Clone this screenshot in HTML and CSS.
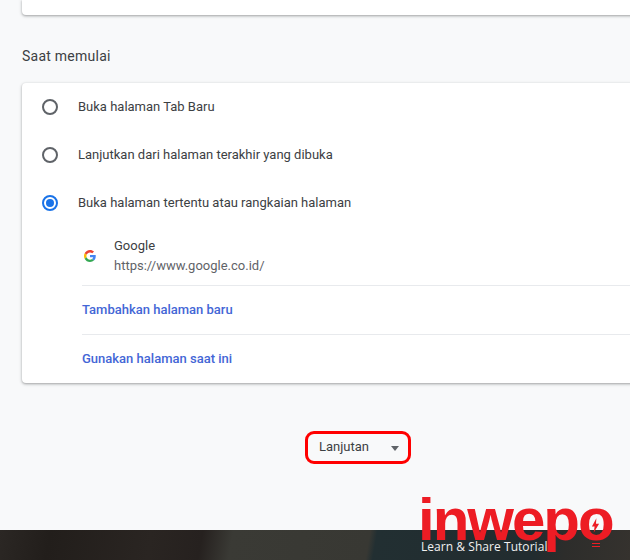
FILE: index.html
```html
<!DOCTYPE html>
<html lang="id">
<head>
<meta charset="utf-8">
<title>Saat memulai</title>
<link rel="stylesheet" href="styles.css">
</head>
<body>
<div class="page">
  <main class="content">
    <div class="card card-top"></div>
    <h2 class="section-title">Saat memulai</h2>
    <section class="card card-main">
      <div class="radio-row"><span class="radio"></span><span class="label">Buka halaman Tab Baru</span></div>
      <div class="radio-row"><span class="radio"></span><span class="label">Lanjutkan dari halaman terakhir yang dibuka</span></div>
      <div class="radio-row"><span class="radio radio-on"></span><span class="label">Buka halaman tertentu atau rangkaian halaman</span></div>
      <div class="sub">
        <div class="site">
          <svg class="favicon" viewBox="0 0 48 48" width="12" height="12" aria-hidden="true">
            <path fill="#EA4335" d="M24 9.500c3.500 0 6.700 1.200 9.200 3.600l6.900-6.900C35.900 2.400 30.500 0 24 0 14.600 0 6.500 5.400 2.600 13.200l8 6.200C12.500 13.700 17.800 9.500 24 9.500z"/>
            <path fill="#4285F4" d="M47 24.500c0-1.600-.1-3.100-.4-4.500H24v9h12.900c-.6 3-2.200 5.500-4.800 7.200l7.800 6C44.400 37.600 47 31.600 47 24.500z"/>
            <path fill="#FBBC05" d="M10.500 28.600C10 27.200 9.800 25.600 9.800 24s.2-3.200.8-4.600l-8-6.200C.9 16.500 0 20.100 0 24s.9 7.500 2.600 10.800l7.900-6.200z"/>
            <path fill="#34A853" d="M24 48c6.500 0 11.900-2.100 15.900-5.800l-7.800-6c-2.100 1.400-4.900 2.300-8.100 2.300-6.200 0-11.500-4.200-13.400-9.900l-8 6.200C6.500 42.600 14.600 48 24 48z"/>
          </svg>
          <div class="site-text">
            <div class="site-name">Google</div>
            <div class="site-url">https://www.google.co.id/</div>
          </div>
        </div>
        <div class="link-row">Tambahkan halaman baru</div>
        <div class="link-row">Gunakan halaman saat ini</div>
      </div>
    </section>
    <div class="advanced-wrap">
      <div class="advanced"><span>Lanjutan</span><span class="caret"></span></div>
    </div>
  </main>
  <footer class="footer"></footer>
  <div class="logo">
    <div class="logo-word">inwepo</div>
    <div class="logo-tag">Learn &amp; Share Tutorial</div>
    <svg class="logo-bolt" viewBox="0 0 10 16" width="9" height="15" aria-hidden="true"><path fill="#ed1c24" d="M6 0 1 9h3l-1 7 6-10H5.500z"/></svg>
    <span class="logo-base"></span>
  </div>
</div>
</body>
</html>
```
FILE: styles.css
```css
* { box-sizing: border-box; }
html, body { margin: 0; height: 100%; }
body { font-family: Roboto, "Liberation Sans", sans-serif; background: #f8f9fa; overflow: hidden; }
.page { position: relative; width: 630px; height: 560px; overflow: hidden; display: flex; flex-direction: column; }
.content { height: 530px; padding-left: 22px; display: flex; flex-direction: column; }
.card { background: #fff; width: 640px; border-radius: 0 0 4px 4px; box-shadow: 0 1px 2px rgba(60,64,67,.3), 0 1px 3px 1px rgba(60,64,67,.15); }
.card-top { height: 15px; flex: none; }
.section-title { margin: 0; height: 68px; padding-top: 32px; font-size: 14px; line-height: 18px; font-weight: 400; color: #3c4043; letter-spacing: .25px; }
.card-main { height: 300px; flex: none; border-radius: 4px; }
.radio-row { height: 48px; display: flex; align-items: center; font-size: 13px; color: #3c4043; }
.label { padding-bottom: 2px; }
.radio { width: 16px; height: 16px; margin: 0 20px; border: 2px solid #5f6368; border-radius: 50%; flex: none; display: flex; align-items: center; justify-content: center; }
.radio-on { border-color: #1a73e8; }
.radio-on::after { content: ""; width: 8px; height: 8px; border-radius: 50%; background: #1a73e8; }
.sub { padding-left: 60px; }
.site { height: 59px; display: flex; align-items: center; border-bottom: 1px solid #e8eaed; }
.favicon { flex: none; margin: 0 18px 0 2px; }
.site-text { font-size: 13px; line-height: 20px; align-self: flex-start; padding-top: 9px; }
.site-name { color: #3c4043; }
.site-url { color: #5f6368; }
.link-row { height: 48px; display: flex; align-items: center; padding-bottom: 2px; font-size: 13px; font-weight: 500; color: #4366d6; }
.link-row + .link-row { height: 49px; border-top: 1px solid #e8eaed; padding-bottom: 1px; }
.advanced-wrap { padding: 48px 0 0 283px; }
.advanced { width: 106px; height: 33px; border: 3px solid #f00; border-radius: 9px; display: flex; align-items: center; padding: 0 0 2px 11px; font-size: 13px; color: #3c4043; }
.caret { margin: 3px 0 0 22px; width: 0; height: 0; border-left: 4.5px solid transparent; border-right: 4.5px solid transparent; border-top: 5px solid #5f6368; }
.footer { height: 30px; flex: none; background: linear-gradient(100deg, #2b2724 0, #221e1b 50px, #2a2522 150px, #26211f 200px, #3a3a35 230px, #383833 365px, #222f32 372px, #222c2f 530px, #2d2d2b 560px, #35322e 100%); }
.logo { position: absolute; left: 421px; top: 489px; width: 205px; height: 71px; }
.logo-word { font-family: "Liberation Sans", sans-serif; font-weight: 700; font-size: 60px; line-height: 38px; letter-spacing: -2px; color: #ed1c24; position: absolute; left: -3px; top: 12px; white-space: nowrap; }
.logo-tag { font-family: "Open Sans", sans-serif; font-size: 12px; line-height: 16px; letter-spacing: .05px; color: #f1f1f1; position: absolute; left: 0; top: 50px; white-space: nowrap; }
.logo-bolt { position: absolute; left: 170px; top: 29px; }
.logo-base { position: absolute; left: 171px; top: 54px; width: 8px; height: 4px; border-top: 1px solid #ed1c24; border-bottom: 1px solid #ed1c24; }
```
